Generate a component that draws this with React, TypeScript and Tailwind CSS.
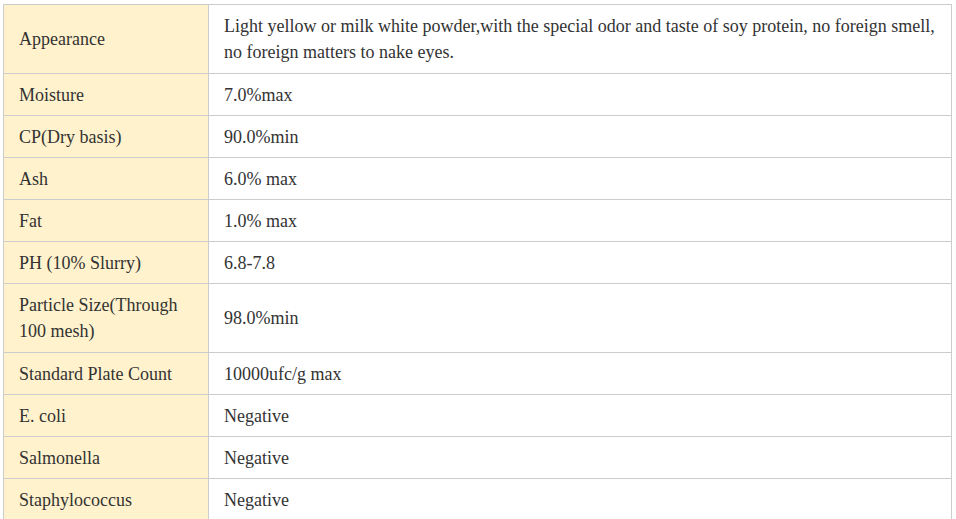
import React from "react";

const rows: [string, string, boolean][] = [
  ["Appearance", "Light yellow or milk white powder,with the special odor and taste of soy protein, no foreign smell, no foreign matters to nake eyes.", true],
  ["Moisture", "7.0%max", false],
  ["CP(Dry basis)", "90.0%min", false],
  ["Ash", "6.0% max", false],
  ["Fat", "1.0% max", false],
  ["PH (10% Slurry)", "6.8-7.8", false],
  ["Particle Size(Through 100 mesh)", "98.0%min", true],
  ["Standard Plate Count", "10000ufc/g max", false],
  ["E. coli", "Negative", false],
  ["Salmonella", "Negative", false],
  ["Staphylococcus", "Negative", false],
];

export default function App() {
  return (
    <div
      className="w-[956px] h-[519px] overflow-hidden bg-white pt-[4px] pl-[3px]"
      style={{ fontFamily: '"Liberation Serif", "Times New Roman", serif' }}
    >
      <div className="w-[949px] border-t border-l border-r border-[#cccccc] text-[18px] leading-[26px] text-[#333]">
        {rows.map(([k, v, tall]) => (
          <div
            key={k}
            className={`grid grid-cols-[205px_1fr] border-b border-[#cccccc] ${tall ? "h-[69px]" : "h-[42px]"}`}
          >
            <div className="flex items-center bg-[#fff2cc] border-r border-[#cccccc] px-[15px]">
              <span>{k}</span>
            </div>
            <div className="flex items-center px-[15px]">
              <span>{v}</span>
            </div>
          </div>
        ))}
      </div>
    </div>
  );
}
